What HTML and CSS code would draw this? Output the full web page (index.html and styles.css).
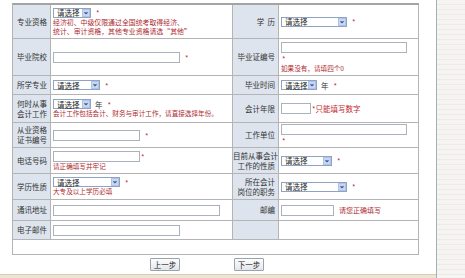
FILE: index.html
```html
<!DOCTYPE html>
<html lang="zh-CN">
<head>
<meta charset="UTF-8">
<title>个人信息填写</title>
<link rel="stylesheet" href="styles.css">
</head>
<body>
<div class="page">
  <div class="main">
    <table class="form">
      <colgroup>
        <col class="c1"><col class="c2"><col class="c3"><col class="c4">
      </colgroup>
      <tr class="r1">
        <th>专业资格</th>
        <td>
          <span class="sel w38"><span>请选择</span><i class="arr"><svg viewBox="0 0 8 8"><path d="M2 3 4 5 6 3"/></svg></i></span><span class="star">*</span>
          <div class="tip wide">经济初、中级仅限通过全国统考取得经济、<br>统计、审计资格，其他专业资格请选“其他”</div>
        </td>
        <th>学&nbsp;&nbsp;历</th>
        <td>
          <span class="sel w66"><span>请选择</span><i class="arr"><svg viewBox="0 0 8 8"><path d="M2 3 4 5 6 3"/></svg></i></span><span class="star">*</span>
        </td>
      </tr>
      <tr class="r2">
        <th>毕业院校</th>
        <td><input type="text" class="w127"><span class="star">*</span></td>
        <th>毕业证编号</th>
        <td>
          <input type="text" class="w126">
          <div class="star below">*</div>
          <div class="tip">如果没有，请填四个0</div>
        </td>
      </tr>
      <tr class="r3">
        <th>所学专业</th>
        <td><span class="sel w47"><span>请选择</span><i class="arr"><svg viewBox="0 0 8 8"><path d="M2 3 4 5 6 3"/></svg></i></span><span class="star">*</span></td>
        <th>毕业时间</th>
        <td><span class="sel w36"><span>请选择</span><i class="arr"><svg viewBox="0 0 8 8"><path d="M2 3 4 5 6 3"/></svg></i></span><span class="unit">年</span><span class="star">*</span></td>
      </tr>
      <tr class="r4">
        <th>何时从事<br>会计工作</th>
        <td>
          <span class="sel w38"><span>请选择</span><i class="arr"><svg viewBox="0 0 8 8"><path d="M2 3 4 5 6 3"/></svg></i></span><span class="unit">年</span><span class="star">*</span>
          <div class="tip">会计工作包括会计、财务与审计工作，请直接选择年份。</div>
        </td>
        <th>会计年限</th>
        <td><input type="text" class="w30"><span class="star tight">*只能填写数字</span></td>
      </tr>
      <tr class="r5">
        <th>从业资格<br>证书编号</th>
        <td><input type="text" class="w87"><span class="star">*</span></td>
        <th>工作单位</th>
        <td>
          <input type="text" class="w126">
          <div class="star below">*</div>
        </td>
      </tr>
      <tr class="r6">
        <th>电话号码</th>
        <td>
          <input type="text" class="w87"><span class="star tight">*</span>
          <div class="tip">请正确填写并牢记</div>
        </td>
        <th>目前从事会计<br>工作的性质</th>
        <td><span class="sel w51"><span>请选择</span><i class="arr"><svg viewBox="0 0 8 8"><path d="M2 3 4 5 6 3"/></svg></i></span><span class="star">*</span></td>
      </tr>
      <tr class="r7">
        <th>学历性质</th>
        <td>
          <span class="sel w67"><span>请选择</span><i class="arr"><svg viewBox="0 0 8 8"><path d="M2 3 4 5 6 3"/></svg></i></span><span class="star">*</span>
          <div class="tip">大专及以上学历必填</div>
        </td>
        <th>所在会计<br>岗位的职务</th>
        <td><span class="sel w66"><span>请选择</span><i class="arr"><svg viewBox="0 0 8 8"><path d="M2 3 4 5 6 3"/></svg></i></span><span class="star">*</span></td>
      </tr>
      <tr class="r8">
        <th>通讯地址</th>
        <td><input type="text" class="w167"></td>
        <th>邮编</th>
        <td><input type="text" class="w53"><span class="tip inline">请您正确填写</span></td>
      </tr>
      <tr class="r9">
        <th>电子邮件</th>
        <td><input type="text" class="w127"></td>
        <th></th>
        <td></td>
      </tr>
      <tr class="r10">
        <td colspan="4" class="spacer"></td>
      </tr>
    </table>
    <div class="btns">
      <button type="button">上一步</button>
      <button type="button">下一步</button>
    </div>
    <div class="foot"></div>
  </div>
  <div class="side"></div>
</div>
</body>
</html>
```

FILE: styles.css
```css
* {
    margin: 0;
    padding: 0;
    box-sizing: border-box;
}

body {
    font: 7.5px/9px "Noto Sans CJK SC", "Liberation Sans", sans-serif;
    color: #333;
    background: #fff;
}

.page {
    display: flex;
    height: 278px;
}

.main {
    width: 437px;
    border-right: 1px solid #9db4b4;
    padding-top: 3px;
    display: flex;
    flex-direction: column;
}

.side {
    flex: 1;
    background: repeating-linear-gradient(#f6f3f3 0 4px, #eeeaea 4px 5px);
}

/* 表单主体 */
.form {
    margin-left: 12px;
    width: 407px;
    table-layout: fixed;
    border-collapse: separate;
    border-spacing: 0;
    border-top: 2px solid #a4a4a4;
    border-left: 1px solid #b4b4b4;
}

.c1 { width: 38px; }
.c2 { width: 182px; }
.c3 { width: 46px; }
.c4 { width: 140px; }

.form th,
.form td {
    border-right: 1px solid #b4b4b4;
    border-bottom: 1px solid #b4b4b4;
    vertical-align: middle;
}

.form th {
    background: #dde4ee;
    font-weight: normal;
    text-align: right;
    padding-right: 3px;
    color: #333;
    white-space: nowrap;
    line-height: 10px;
}

.form td {
    padding-left: 2px;
}

.r1 { height: 34px; }
.r2 { height: 37px; }
.r3 { height: 19px; }
.r4 { height: 28px; }
.r5 { height: 25px; }
.r6 { height: 26px; }
.r7 { height: 26px; }
.r8 { height: 21px; }
.r9 { height: 19px; }
.r10 { height: 15px; }

.form .spacer {
    background: #fff;
}

/* 下拉框 */
.sel {
    display: inline-flex;
    align-items: center;
    justify-content: space-between;
    height: 10px;
    border: 1px solid #8ea4c1;
    background: #fff;
    padding-left: 3px;
    vertical-align: middle;
    color: #222;
}

.arr {
    width: 8px;
    height: 8px;
    background: #c9d7f3;
    border: 1px solid #afc2ea;
    display: flex;
}

.arr svg {
    width: 6px;
    height: 6px;
    fill: none;
    stroke: #3e5a8c;
    stroke-width: 1.6;
}

input {
    height: 11px;
    border: 1px solid #a9b2bd;
    background: #fff;
    vertical-align: middle;
}

.w30 { width: 30px; }
.w36 { width: 36px; }
.w38 { width: 38px; }
.w47 { width: 47px; }
.w51 { width: 51px; }
.w53 { width: 53px; }
.w66 { width: 66px; }
.w67 { width: 67px; }
.w87 { width: 87px; }
.w126 { width: 126px; }
.w127 { width: 127px; }
.w167 { width: 167px; }

.star {
    color: #c0262e;
    margin-left: 5px;
    vertical-align: middle;
}

.star.tight {
    margin-left: 1px;
}

.star.below {
    margin-left: 1px;
    line-height: 11px;
}

.unit {
    margin-left: 4px;
    vertical-align: middle;
}

.tip {
    color: #ad2a30;
    font-size: 6.6px;
    line-height: 9px;
    white-space: nowrap;
}

.tip.wide {
    font-size: 6.9px;
}

.tip.inline {
    margin-left: 5px;
    font-size: 7px;
    vertical-align: middle;
}

/* 按钮 */
.btns {
    height: 19px;
    display: flex;
    align-items: center;
    padding-left: 150px;
    gap: 54px;
}

.btns button {
    width: 30px;
    height: 13px;
    font: inherit;
    color: #222;
    border: 1px solid #9aa3ad;
    border-radius: 1px;
    background: linear-gradient(#fdfdfd, #e3e6ea);
}

.foot {
    flex: 1;
    border-top: 1px solid #d9ccb2;
    background: #ede4d4;
}
```
